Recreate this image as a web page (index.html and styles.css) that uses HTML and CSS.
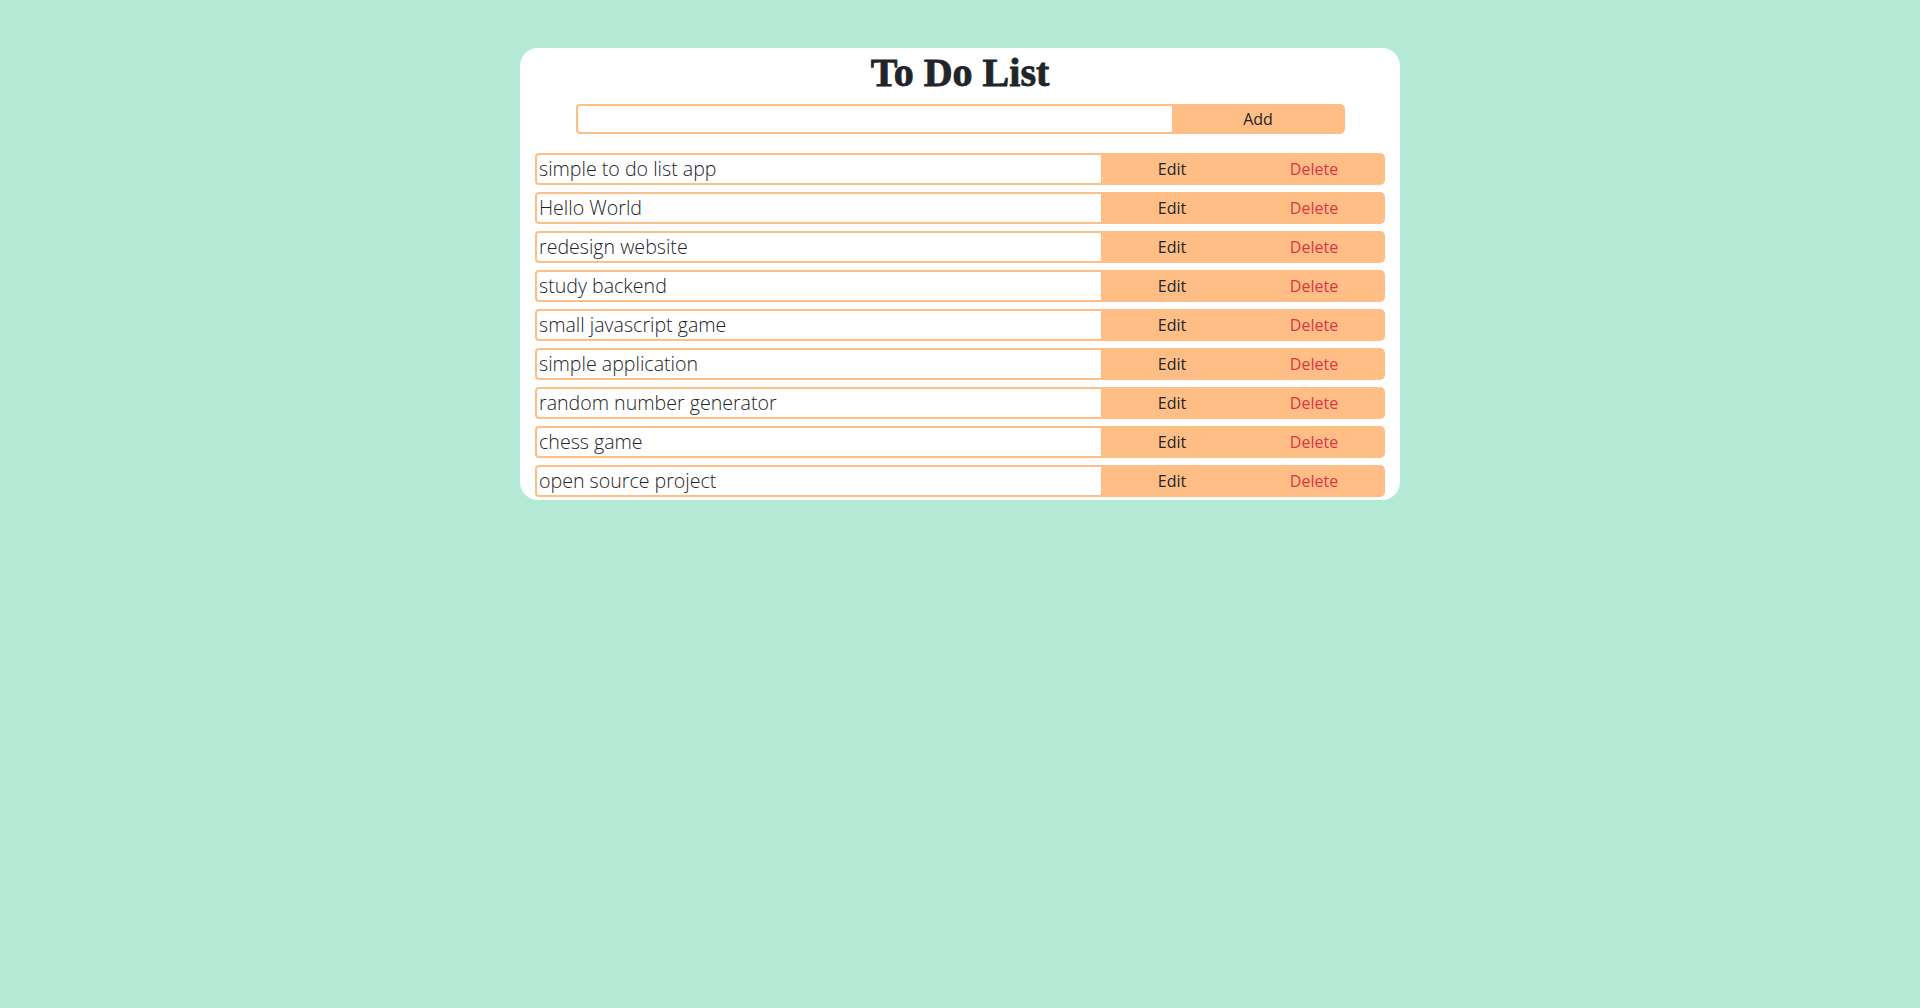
FILE: index.html
```html
<!DOCTYPE html>
<html lang="en">
<head>
<meta charset="utf-8">
<title>To Do List</title>
<link rel="stylesheet" href="styles.css">
</head>
<body>
<main class="card">
  <h1 class="title">To Do List</h1>
  <form class="add-form">
    <input class="add-input" type="text">
    <button class="add-btn" type="button">Add</button>
  </form>
  <ul class="list">
    <li class="row"><input class="item" type="text" value="simple to do list app"><button class="btn edit" type="button">Edit</button><button class="btn delete" type="button">Delete</button></li>
    <li class="row"><input class="item" type="text" value="Hello World"><button class="btn edit" type="button">Edit</button><button class="btn delete" type="button">Delete</button></li>
    <li class="row"><input class="item" type="text" value="redesign website"><button class="btn edit" type="button">Edit</button><button class="btn delete" type="button">Delete</button></li>
    <li class="row"><input class="item" type="text" value="study backend"><button class="btn edit" type="button">Edit</button><button class="btn delete" type="button">Delete</button></li>
    <li class="row"><input class="item" type="text" value="small javascript game"><button class="btn edit" type="button">Edit</button><button class="btn delete" type="button">Delete</button></li>
    <li class="row"><input class="item" type="text" value="simple application"><button class="btn edit" type="button">Edit</button><button class="btn delete" type="button">Delete</button></li>
    <li class="row"><input class="item" type="text" value="random number generator"><button class="btn edit" type="button">Edit</button><button class="btn delete" type="button">Delete</button></li>
    <li class="row"><input class="item" type="text" value="chess game"><button class="btn edit" type="button">Edit</button><button class="btn delete" type="button">Delete</button></li>
    <li class="row"><input class="item" type="text" value="open source project"><button class="btn edit" type="button">Edit</button><button class="btn delete" type="button">Delete</button></li>
  </ul>
</main>
</body>
</html>
```
FILE: styles.css
```css
* { box-sizing: border-box; }
html, body { height: 100%; }
body {
  margin: 0;
  background: #b4e9d6;
  font-family: "Open Sans", "Noto Sans", sans-serif;
  color: #212529;
}
.card {
  width: 880px;
  margin: 48px auto 0;
  background: #ffffff;
  border-radius: 18px;
  padding: 0 15px 3px;
}
.title {
  margin: 0;
  font-family: "Liberation Serif", "Times New Roman", serif;
  font-weight: 700;
  font-size: 40px;
  line-height: 50px;
  text-align: center;
  color: #212529;
  -webkit-text-stroke: 0.8px #212529;
}
.add-form {
  display: flex;
  width: 769px;
  height: 30px;
  margin: 6px auto 0;
}
.add-input {
  width: 596px;
  height: 30px;
  border: 2px solid #ffbe86;
  border-right: none;
  border-radius: 4px 0 0 4px;
  outline: none;
  padding: 0 4px;
  font: inherit;
}
.add-btn {
  flex: 1;
  height: 30px;
  border: none;
  background: #ffbe86;
  border-radius: 0 5px 5px 0;
  font-family: inherit;
  font-weight: 400;
  font-size: 16px;
  color: #212529;
}
.list {
  list-style: none;
  margin: 19px 0 0;
  padding: 0;
  display: flex;
  flex-direction: column;
  gap: 7px;
}
.row {
  display: flex;
  height: 32px;
}
.item {
  width: 566px;
  height: 32px;
  border: 2px solid #ffbe86;
  border-right: none;
  border-radius: 4px 0 0 4px;
  outline: none;
  padding: 0 2px 2px;
  font-family: inherit;
  font-weight: 300;
  font-size: 19.6px;
  color: #212529;
  background: #fff;
}
.btn {
  width: 142px;
  height: 32px;
  border: none;
  background: #ffbe86;
  font-family: inherit;
  font-weight: 400;
  font-size: 16px;
  padding: 0;
  color: #212529;
}
.delete {
  color: #dc3545;
  border-radius: 0 5px 5px 0;
}
```
